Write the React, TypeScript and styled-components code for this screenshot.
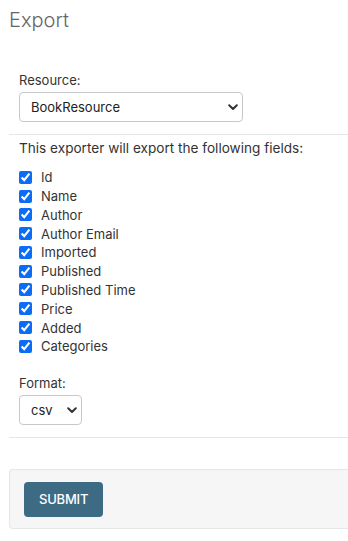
import React from "react";
import styled, { createGlobalStyle } from "styled-components";

const GlobalStyle = createGlobalStyle`
  html, body {
    margin: 0;
    padding: 0;
    background: #fff;
  }
  body {
    font-family: Inter, "Liberation Sans", sans-serif;
    color: #333;
    font-size: 13px;
    overflow: hidden;
  }
`;

const Page = styled.div`
  padding: 9px 0 0 9px;
`;

const Title = styled.h1`
  margin: 0;
  font-size: 20px;
  line-height: 23px;
  font-weight: 300;
  color: #666;
`;

const Module = styled.fieldset<{ $first?: boolean }>`
  margin: ${(p) => (p.$first ? "40px" : "0")} 0 0;
  padding: 0 0 12px 10px;
  border: none;
  border-bottom: 1px solid #e6e6e6;
`;

const FieldLabel = styled.label`
  display: block;
  font-size: 13px;
  line-height: 17px;
  color: #333;
  margin-bottom: 3px;
`;

const SelectWrap = styled.div<{ $width: number }>`
  position: relative;
  width: ${(p) => p.$width}px;
`;

const Select = styled.select`
  appearance: none;
  -webkit-appearance: none;
  display: block;
  width: 100%;
  height: 30px;
  box-sizing: border-box;
  border: 1px solid #c8c8c8;
  border-radius: 4px;
  background: #fff;
  padding: 0 20px 0 11px;
  font-family: Inter, "Liberation Sans", sans-serif;
  font-size: 13px;
  color: #222;
  outline: none;
`;

const Chevron = styled.svg`
  position: absolute;
  right: 5px;
  top: 12px;
  pointer-events: none;
`;

const Intro = styled.p`
  margin: 5px 0 0;
  line-height: 17px;
  font-size: 13.6px;
`;

const FieldList = styled.ul`
  list-style: none;
  margin: 11px 0 0;
  padding: 0;
`;

const FieldRow = styled.li`
  display: flex;
  align-items: center;
  height: 18.78px;
`;

const Check = styled.input`
  width: 13px;
  height: 13px;
  margin: 0 9px 0 0;
  accent-color: #0b6cf5;
`;

const FieldText = styled.span`
  font-size: 13px;
  color: #333;
`;

const FormatBlock = styled.div`
  margin-top: 19px;
`;

const SubmitRow = styled.div`
  margin-top: 31px;
  background: #f6f6f6;
  border: 1px solid #e6e6e6;
  border-right: none;
  border-radius: 4px 0 0 4px;
  padding: 12px 14px 11px;
`;

const SubmitButton = styled.button`
  display: block;
  height: 35px;
  padding: 0 15px;
  border: none;
  border-radius: 4px;
  background: #3d6b84;
  color: #fff;
  font-family: Inter, "Liberation Sans", sans-serif;
  font-size: 13px;
  font-weight: 500;
  text-transform: uppercase;
  letter-spacing: -0.2px;
`;

const fields = [
  "Id",
  "Name",
  "Author",
  "Author Email",
  "Imported",
  "Published",
  "Published Time",
  "Price",
  "Added",
  "Categories",
];

function ChevronIcon() {
  return (
    <Chevron width="10" height="7" viewBox="0 0 10 7">
      <path
        d="M1.2 1.3 L5 5 L8.8 1.3"
        fill="none"
        stroke="#333"
        strokeWidth="2"
        strokeLinecap="round"
        strokeLinejoin="round"
      />
    </Chevron>
  );
}

export default function App() {
  return (
    <Page>
      <GlobalStyle />
      <Title>Export</Title>

      <Module $first>
        <FieldLabel htmlFor="resource">Resource:</FieldLabel>
        <SelectWrap $width={224}>
          <Select id="resource" defaultValue="BookResource">
            <option>BookResource</option>
          </Select>
          <ChevronIcon />
        </SelectWrap>
      </Module>

      <Module>
        <Intro>This exporter will export the following fields:</Intro>
        <FieldList>
          {fields.map((f) => (
            <FieldRow key={f}>
              <Check type="checkbox" defaultChecked />
              <FieldText>{f}</FieldText>
            </FieldRow>
          ))}
        </FieldList>
        <FormatBlock>
          <FieldLabel htmlFor="format">Format:</FieldLabel>
          <SelectWrap $width={63}>
            <Select id="format" defaultValue="csv">
              <option>csv</option>
            </Select>
            <ChevronIcon />
          </SelectWrap>
        </FormatBlock>
      </Module>

      <SubmitRow>
        <SubmitButton type="button">Submit</SubmitButton>
      </SubmitRow>
    </Page>
  );
}
